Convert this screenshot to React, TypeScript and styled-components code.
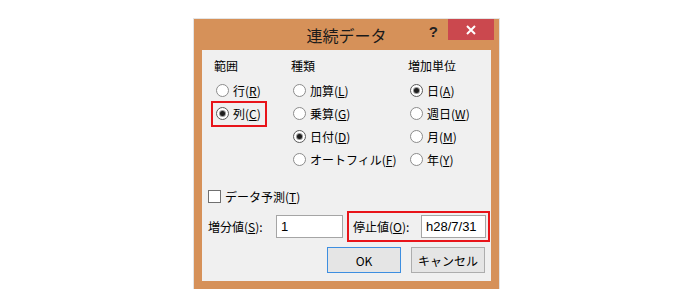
import React from 'react';
import styled, { createGlobalStyle } from 'styled-components';

const GlobalStyle = createGlobalStyle`
  html, body {
    margin: 0;
    padding: 0;
    background: #ffffff;
  }
  body {
    font-family: "Noto Sans CJK JP", "Noto Sans", sans-serif;
    color: #000;
  }
`;

const Page = styled.div`
  padding: 19px 0 0 194px;
`;

const Dialog = styled.div`
  width: 305px;
  height: 270px;
  box-sizing: border-box;
  background: #d69159;
  padding: 0 8px 8px;
  display: flex;
  flex-direction: column;
  box-shadow: 0 0 0 1px #e4e4e4;
`;

const TitleBar = styled.div`
  height: 31px;
  margin: 0 -8px;
  display: grid;
  grid-template-columns: 1fr auto 1fr;
  align-items: start;
`;

const Title = styled.div`
  font-size: 16px;
  line-height: 31px;
  color: #1a1a1a;
  padding-top: 1px;
`;

const TitleButtons = styled.div`
  display: flex;
  justify-content: flex-end;
  align-items: flex-start;
  padding-right: 5px;
`;

const Help = styled.div`
  font-family: "Liberation Sans", sans-serif;
  font-weight: bold;
  font-size: 15px;
  line-height: 26px;
  color: #222;
  margin-right: 10px;
`;

const Close = styled.div`
  width: 46px;
  height: 21px;
  background: #cb484e;
  display: flex;
  align-items: center;
  justify-content: center;
`;

const Body = styled.div`
  flex: 1;
  background: #f0f0f0;
  padding-top: 8px;
  display: flex;
  flex-direction: column;
`;

const Groups = styled.div`
  display: grid;
  grid-template-columns: 77px 117px 1fr;
  padding-left: 12px;
`;

const Group = styled.div`
  display: flex;
  flex-direction: column;
`;

const GroupLabel = styled.div`
  font-size: 12px;
  line-height: 16px;
  height: 16px;
  margin-bottom: 5px;
`;

const Row = styled.div<{ $boxed?: boolean }>`
  height: 23px;
  display: flex;
  align-items: center;
  padding-left: 2px;
`;

const Option = styled.span<{ $boxed?: boolean }>`
  display: inline-flex;
  align-items: center;
  gap: 4px;
  font-size: 12px;
  line-height: 16px;
  outline: ${(p) => (p.$boxed ? '2px solid #e8141a' : 'none')};
  outline-offset: 3px;
  padding-right: ${(p) => (p.$boxed ? '1px' : '0')};
`;

const RadioDot = styled.span<{ $on?: boolean }>`
  width: 13px;
  height: 13px;
  box-sizing: border-box;
  border-radius: 50%;
  border: 1px solid ${(p) => (p.$on ? '#5a5a5a' : '#8c8c8c')};
  background: #fff;
  display: inline-flex;
  align-items: center;
  justify-content: center;
  &::after {
    content: '';
    width: 5px;
    height: 5px;
    border-radius: 50%;
    background: #1e1e1e;
    box-shadow: 0 0 0 1px #9a9a9a;
    display: ${(p) => (p.$on ? 'block' : 'none')};
  }
`;

const CheckRow = styled.div`
  margin-top: 16px;
  padding-left: 6px;
  height: 18px;
  display: flex;
  align-items: center;
  gap: 4px;
  font-size: 12px;
`;

const CheckBox = styled.span`
  width: 13px;
  height: 13px;
  box-sizing: border-box;
  border: 1px solid #707070;
  background: #fff;
`;

const Fields = styled.div`
  margin-top: 6px;
  padding-left: 6px;
  display: flex;
  align-items: center;
  height: 31px;
`;

const FieldLabel = styled.span`
  width: 68px;
  font-size: 12px;
  line-height: 16px;
  white-space: nowrap;
`;

const Input = styled.div<{ $w: number }>`
  width: ${(p) => p.$w}px;
  height: 23px;
  box-sizing: border-box;
  border: 1px solid #a5a5a5;
  background: #fff;
  font-family: "Liberation Sans", sans-serif;
  font-size: 13px;
  line-height: 21px;
  padding-left: 4px;
`;

const RedBox = styled.div`
  margin-left: 4px;
  border: 2px solid #e8141a;
  padding: 2px 2px 2px 4px;
  display: flex;
  align-items: center;
`;

const Buttons = styled.div`
  margin-top: 5px;
  display: flex;
  justify-content: flex-end;
  gap: 10px;
  padding-right: 6px;
`;

const Button = styled.div<{ $primary?: boolean }>`
  width: 74px;
  height: 26px;
  box-sizing: border-box;
  border: 1px solid ${(p) => (p.$primary ? '#3d8ee0' : '#adadad')};
  background: #e5e5e5;
  display: flex;
  align-items: center;
  justify-content: center;
  font-size: 12px;
`;

const U = styled.span`
  text-decoration: underline;
`;

type Opt = { text: string; key: string; on?: boolean; boxed?: boolean };

const groups: { label: string; options: Opt[] }[] = [
  {
    label: '範囲',
    options: [
      { text: '行', key: 'R' },
      { text: '列', key: 'C', on: true, boxed: true },
    ],
  },
  {
    label: '種類',
    options: [
      { text: '加算', key: 'L' },
      { text: '乗算', key: 'G' },
      { text: '日付', key: 'D', on: true },
      { text: 'オートフィル', key: 'F' },
    ],
  },
  {
    label: '増加単位',
    options: [
      { text: '日', key: 'A', on: true },
      { text: '週日', key: 'W' },
      { text: '月', key: 'M' },
      { text: '年', key: 'Y' },
    ],
  },
];

const App: React.FC = () => {
  return (
    <Page>
      <GlobalStyle />
      <Dialog>
        <TitleBar>
          <div />
          <Title>連続データ</Title>
          <TitleButtons>
            <Help>?</Help>
            <Close>
              <svg width="10" height="10" viewBox="0 0 10 10">
                <path d="M1 1 L9 9 M9 1 L1 9" stroke="#fff" strokeWidth="2" />
              </svg>
            </Close>
          </TitleButtons>
        </TitleBar>
        <Body>
          <Groups>
            {groups.map((g) => (
              <Group key={g.label}>
                <GroupLabel>{g.label}</GroupLabel>
                {g.options.map((o) => (
                  <Row key={o.key}>
                    <Option $boxed={o.boxed}>
                      <RadioDot $on={o.on} />
                      <span>
                        {o.text}(<U>{o.key}</U>)
                      </span>
                    </Option>
                  </Row>
                ))}
              </Group>
            ))}
          </Groups>
          <CheckRow>
            <CheckBox />
            <span>
              データ予測(<U>T</U>)
            </span>
          </CheckRow>
          <Fields>
            <FieldLabel>
              増分値(<U>S</U>):
            </FieldLabel>
            <Input $w={67}>1</Input>
            <RedBox>
              <FieldLabel>
                停止値(<U>O</U>):
              </FieldLabel>
              <Input $w={65}>h28/7/31</Input>
            </RedBox>
          </Fields>
          <Buttons>
            <Button $primary>OK</Button>
            <Button>キャンセル</Button>
          </Buttons>
        </Body>
      </Dialog>
    </Page>
  );
};

export default App;
